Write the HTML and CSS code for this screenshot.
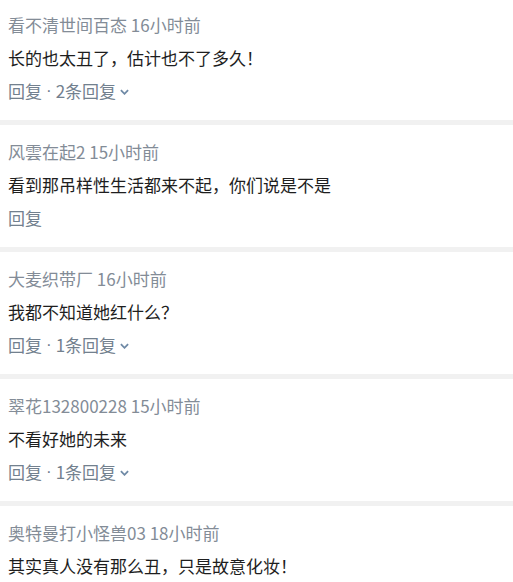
FILE: index.html
```html
<!DOCTYPE html>
<html lang="zh-CN">
<head>
<meta charset="utf-8">
<title>评论</title>
<link rel="stylesheet" href="styles.css">
</head>
<body>
<div class="list">
  <div class="comment first">
    <div class="meta"><span class="name">看不清世间百态</span> <span class="time">16小时前</span></div>
    <div class="text">长的也太丑了，估计也不了多久！</div>
    <div class="reply">回复<span class="dot">·</span>2条回复<svg class="chev" viewBox="0 0 10 6" width="9" height="6"><path d="M1 1 L5 5 L9 1" fill="none" stroke="currentColor" stroke-width="2"/></svg></div>
  </div>
  <div class="comment">
    <div class="meta"><span class="name">风雲在起2</span> <span class="time">15小时前</span></div>
    <div class="text">看到那吊样性生活都来不起，你们说是不是</div>
    <div class="reply">回复</div>
  </div>
  <div class="comment">
    <div class="meta"><span class="name">大麦织带厂</span> <span class="time">16小时前</span></div>
    <div class="text">我都不知道她红什么？</div>
    <div class="reply">回复<span class="dot">·</span>1条回复<svg class="chev" viewBox="0 0 10 6" width="9" height="6"><path d="M1 1 L5 5 L9 1" fill="none" stroke="currentColor" stroke-width="2"/></svg></div>
  </div>
  <div class="comment">
    <div class="meta"><span class="name">翠花132800228</span> <span class="time">15小时前</span></div>
    <div class="text">不看好她的未来</div>
    <div class="reply">回复<span class="dot">·</span>1条回复<svg class="chev" viewBox="0 0 10 6" width="9" height="6"><path d="M1 1 L5 5 L9 1" fill="none" stroke="currentColor" stroke-width="2"/></svg></div>
  </div>
  <div class="comment">
    <div class="meta"><span class="name">奥特曼打小怪兽03</span> <span class="time">18小时前</span></div>
    <div class="text">其实真人没有那么丑，只是故意化妆！</div>
  </div>
</div>
</body>
</html>
```

FILE: styles.css
```css
html, body {
  margin: 0;
  padding: 0;
  background: #ffffff;
}
body {
  font-family: "Noto Sans CJK SC", "Noto Sans", sans-serif;
  font-size: 17px;
}
.list {
  display: flex;
  flex-direction: column;
}
.comment {
  padding: 10px 8px 13px;
  border-top: 5px solid #f1f1f1;
}
.comment.first {
  padding-top: 8px;
  border-top: none;
}
.meta,
.text,
.reply {
  height: 33px;
  line-height: 33px;
  white-space: nowrap;
}
.meta {
  color: #838c97;
}
.text {
  color: #1e1e1e;
}
.reply {
  color: #72808e;
  display: flex;
  align-items: center;
}
.dot {
  font-family: "Liberation Sans", sans-serif;
  margin: 0 4px;
}
.chev {
  margin-left: 4px;
  margin-top: 2px;
  color: #6f8aa6;
}
```
